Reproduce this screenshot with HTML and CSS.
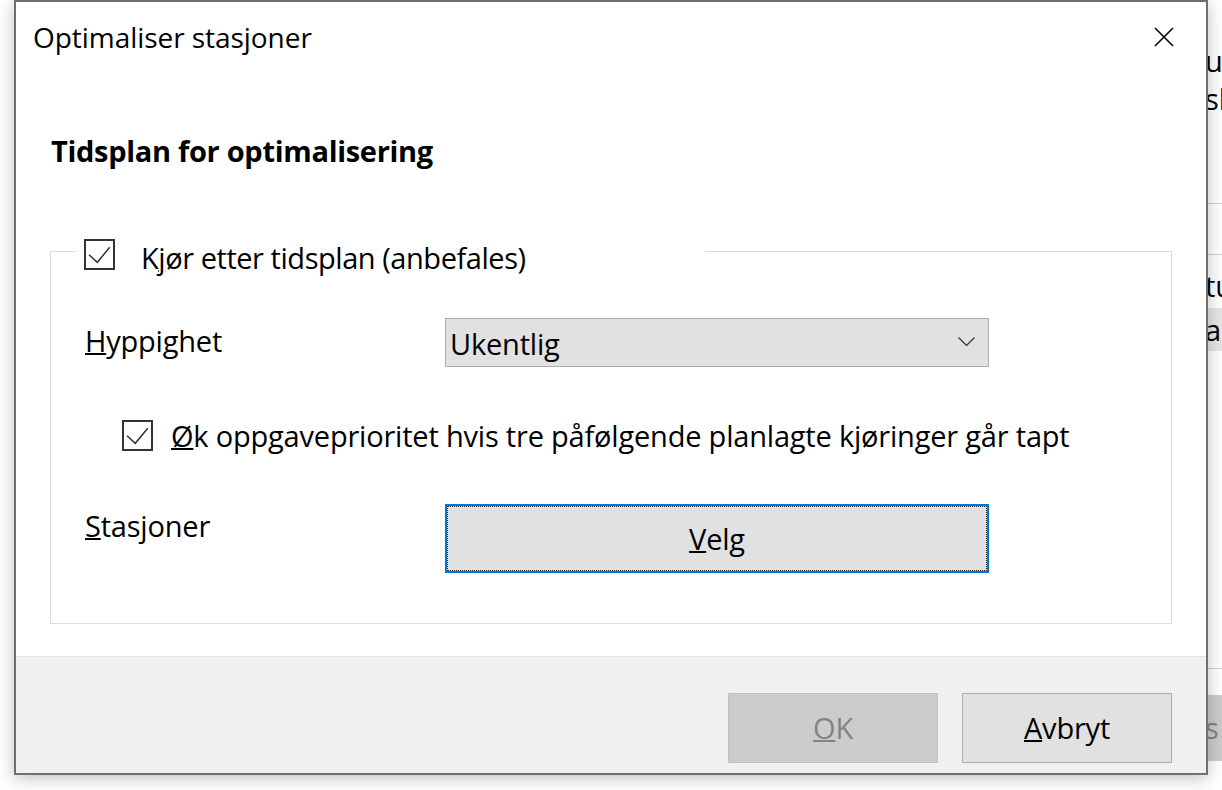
FILE: index.html
```html
<!DOCTYPE html>
<html lang="no">
<head>
<meta charset="utf-8">
<title>Optimaliser stasjoner</title>
<link rel="stylesheet" href="styles.css">
</head>
<body>
<div class="desktop">
  <div class="bgapp">
    <div class="bg-text bg-t1">u</div>
    <div class="bg-text">sl</div>
    <div class="bg-rule bg-r1"></div>
    <div class="bg-rule bg-r2"></div>
    <div class="bg-text bg-t3">tu</div>
    <div class="bg-bar">a</div>
    <div class="bg-rule bg-r3"></div>
    <div class="bg-btn">s</div>
  </div>

  <div class="dialog">
    <div class="titlebar">
      <span class="title">Optimaliser stasjoner</span>
      <span class="close">
        <svg width="20" height="20" viewBox="0 0 20 20"><path d="M1 1 L19 19 M19 1 L1 19" stroke="#000" stroke-width="1.6" fill="none"/></svg>
      </span>
    </div>

    <div class="body">
      <h1 class="heading">Tidsplan for optimalisering</h1>
      <fieldset class="group">
        <legend class="group-legend">
          <span class="check check-legend">
            <svg width="27" height="27" viewBox="0 0 27 27"><path d="M3 13.7 L11.3 21.3 L23.7 6.3" stroke="#333" stroke-width="1.5" fill="none"/></svg>
          </span>
          <span class="legend-text">K<u>j</u>ør etter tidsplan (anbefales)</span>
        </legend>

        <div class="row row-freq">
          <span class="label"><u>H</u>yppighet</span>
          <div class="select">
            <span class="select-value">Ukentlig</span>
            <svg class="chev" width="17" height="9" viewBox="0 0 17 9"><path d="M0.5 0.5 L8.5 8.5 L16.5 0.5" stroke="#333" stroke-width="1.2" fill="none"/></svg>
          </div>
        </div>

        <div class="row-boost">
          <span class="check">
            <svg width="27" height="27" viewBox="0 0 27 27"><path d="M3 13.7 L11.3 21.3 L23.7 6.3" stroke="#333" stroke-width="1.5" fill="none"/></svg>
          </span>
          <span class="boost-text"><u>Ø</u>k oppgaveprioritet hvis tre påfølgende planlagte kjøringer går tapt</span>
        </div>

        <div class="row row-drives">
          <span class="label label-top"><u>S</u>tasjoner</span>
          <button class="btn btn-focus"><u>V</u>elg</button>
        </div>
      </fieldset>
    </div>

    <div class="footer">
      <button class="btn btn-foot btn-disabled"><u>O</u>K</button>
      <button class="btn btn-foot"><u>A</u>vbryt</button>
    </div>
  </div>
</div>
</body>
</html>
```

FILE: styles.css
```css
* { box-sizing: border-box; }
html, body { margin: 0; padding: 0; }
body {
  width: 1222px;
  height: 790px;
  overflow: hidden;
  background: #ffffff;
  font-family: "Open Sans", "Noto Sans", sans-serif;
  color: #000;
}
u {
  text-decoration: underline;
  text-decoration-thickness: 1.5px;
  text-underline-offset: 1px;
}
.desktop { position: relative; width: 1222px; height: 790px; overflow: hidden; }

/* background window peeking out on the right */
.bgapp {
  position: absolute;
  left: 1100px;
  top: 0;
  width: 122px;
  height: 790px;
  overflow: hidden;
  display: flex;
  flex-direction: column;
  font-size: 29px;
}
.bg-text { padding-left: 105px; height: 38px; line-height: 38px; white-space: nowrap; }
.bg-t1 { margin-top: 42px; }
.bg-rule { flex: none; height: 1px; background: #cfcfcf; }
.bg-r1 { margin-top: 85px; }
.bg-r2 { margin-top: 50px; }
.bg-t3 { margin-top: 12px; }
.bg-bar { margin-top: 3px; height: 43px; line-height: 43px; padding-left: 105px; background: #e6e6e6; }
.bg-r3 { margin-top: 317px; }
.bg-btn { margin-top: 26px; height: 66px; line-height: 66px; padding-left: 105px; background: #cccccc; color: #858585; }

/* dialog window */
.dialog {
  position: absolute;
  left: 14px;
  top: 0;
  width: 1194px;
  height: 775px;
  border: 2px solid #6f6f6f;
  background: #fff;
  box-shadow: 0 3px 16px rgba(0, 0, 0, 0.25);
  display: flex;
  flex-direction: column;
  font-size: 29px;
  letter-spacing: -0.2px;
}
.titlebar {
  height: 70px;
  flex: none;
  display: flex;
  align-items: center;
  justify-content: space-between;
  padding: 0 32px 0 17px;
}
.title { font-size: 28px; line-height: 40px; letter-spacing: -0.05px; }
.close { display: flex; width: 20px; height: 20px; }
.close svg { display: block; }

.body { flex: 1; display: flex; flex-direction: column; }
.heading {
  margin: 59px 0 0 35px;
  font-size: 29px;
  font-weight: 700;
  line-height: 40px;
  letter-spacing: -0.3px;
}
.group {
  margin: 61px 34px 0;
  border: 1px solid #dcdcdc;
  padding: 0 0 50px;
  min-width: 0;
}
.group-legend {
  width: 630px;
  height: 38px;
  padding: 0;
  margin-left: 24px;
  display: flex;
  align-items: flex-end;
}
.check {
  flex: none;
  width: 31px;
  height: 31px;
  border: 2px solid #333;
  background: #fff;
  display: flex;
}
.check svg { display: block; }
.check-legend { margin-left: 9px; }
.legend-text { margin-left: 26px; line-height: 24px; white-space: nowrap; letter-spacing: -0.45px; }

.row {
  display: grid;
  grid-template-columns: 360px 544px;
  margin-left: 34px;
}
.label { line-height: 40px; white-space: nowrap; }
.row-freq { margin-top: 48px; height: 49px; align-items: center; }
.row-freq .label { margin-top: -4px; }
.select {
  height: 49px;
  border: 1px solid #adadad;
  background: #e1e1e1;
  display: flex;
  align-items: center;
  justify-content: space-between;
  padding: 2px 13px 0 4px;
}
.select-value { line-height: 40px; }
.chev { display: block; margin-top: -4px; }

.row-boost {
  margin: 53px 0 0 71px;
  height: 31px;
  display: flex;
  align-items: center;
  gap: 18px;
}
.boost-text { line-height: 40px; white-space: nowrap; }

.row-drives { margin-top: 53px; align-items: start; }
.label-top { line-height: 40px; margin-top: 2px; }

.btn {
  font: inherit;
  letter-spacing: inherit;
  color: #000;
  background: #e1e1e1;
  border: 1px solid #adadad;
  padding: 0;
  margin: 0;
  line-height: 40px;
  text-align: center;
}
.btn-focus {
  height: 69px;
  border: 2px solid #0078d7;
  outline: 1px dotted #222;
  outline-offset: -3px;
}

.footer {
  height: 117px;
  flex: none;
  background: #f0f0f0;
  border-top: 1px solid #e2e2e2;
  display: flex;
  justify-content: flex-end;
  align-items: flex-start;
  gap: 24px;
  padding: 36px 34px 0 0;
}
.btn-foot { width: 210px; height: 70px; }
.btn-disabled { background: #cccccc; border-color: #bfbfbf; color: #838383; }
```
